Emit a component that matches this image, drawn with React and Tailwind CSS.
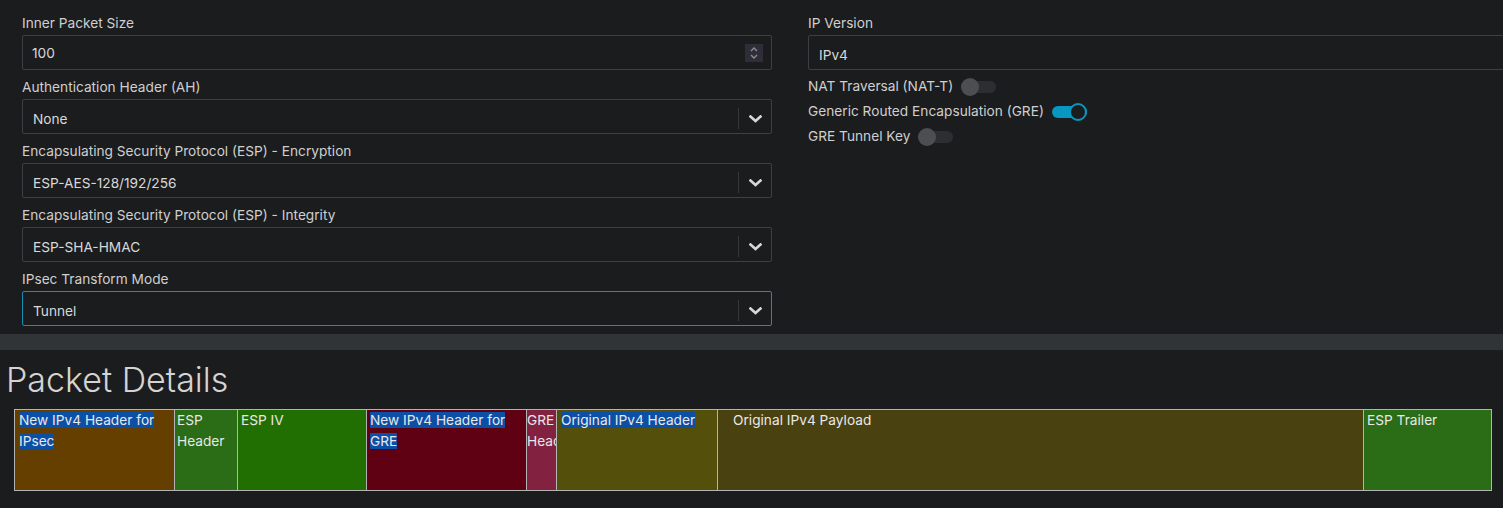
import React from 'react';

const Chevron = () => (
  <svg width="13" height="8" viewBox="0 0 13 8" fill="none">
    <polyline points="1.5,1.5 6.5,6 11.5,1.5" stroke="#d6d6d6" strokeWidth="2.6" strokeLinecap="square" />
  </svg>
);

const Label = ({ children }) => (
  <div className="h-[29px] pt-[7px] pb-[2px] text-[13.7px] leading-[20px] text-[#cfcfcf]">{children}</div>
);

const Select = ({ value, focused }) => (
  <div
    className={`flex h-[35px] items-stretch rounded-[2px] border ${
      focused ? 'border-[#1b8db3]' : 'border-[#3d4042]'
    } bg-[#1b1c1e]`}
  >
    <div className="flex flex-1 items-center pl-[10px] pt-[5px] text-[13.7px] text-[#d8d8d8]">{value}</div>
    <div className="mt-[8px] mb-[4px] w-px bg-[#35383a]" />
    <div className="flex w-[32px] items-center justify-center pt-[5px]">
      <Chevron />
    </div>
  </div>
);

const Toggle = ({ on }) => (
  <div className="relative ml-[8px] h-[18px] w-[35px]">
    <div
      className={`absolute left-0 right-0 top-[3px] h-[12px] rounded-full ${on ? 'bg-[#0897c0]' : 'bg-[#2c2f32]'}`}
    />
    {on ? (
      <div className="absolute right-0 top-0 h-[18px] w-[18px] rounded-full border-2 border-[#0897c0] bg-[#1b1c1e]" />
    ) : (
      <div className="absolute left-0 top-0 h-[18px] w-[18px] rounded-full bg-[#4b4f52]" />
    )}
  </div>
);

const Hl = ({ children }) => <span className="bg-[#0b4fa7]">{children}</span>;

const App = () => {
  const segments = [
    { w: 'w-[160px]', bg: 'bg-[#653f00]', pl: 'pl-[4px]', text: <Hl>New IPv4 Header for IPsec</Hl> },
    { w: 'w-[63px]', bg: 'bg-[#2a6d16]', pl: 'pl-[2px]', text: 'ESP Header' },
    { w: 'w-[129px]', bg: 'bg-[#216f02]', pl: 'pl-[3px]', text: 'ESP IV' },
    { w: 'w-[160px]', bg: 'bg-[#5f0013]', pl: 'pl-[3px]', text: <Hl>New IPv4 Header for GRE</Hl> },
    { w: 'w-[30px]', bg: 'bg-[#832140]', pl: 'pl-0', text: 'GRE Header' },
    { w: 'w-[161px]', bg: 'bg-[#554f0c]', pl: 'pl-[4px]', text: <Hl>Original IPv4 Header</Hl> },
    { w: 'w-[646px]', bg: 'bg-[#4a4111]', pl: 'pl-[15px]', text: 'Original IPv4 Payload' },
    { w: 'w-[127px]', bg: 'bg-[#2a6d16]', pl: 'pl-[3px]', text: 'ESP Trailer', last: true },
  ];

  return (
    <div className="min-h-screen overflow-hidden bg-[#1b1c1e] font-['Inter',sans-serif]">
      <div className="flex gap-[36px] pl-[22px] pt-[6px]">
        {/* left column */}
        <div className="w-[750px] shrink-0">
          <Label>Inner Packet Size</Label>
          <div className="flex h-[35px] items-center rounded-[2px] border border-[#3d4042] bg-[#1b1c1e] pr-[8px]">
            <div className="flex-1 pl-[9px] pt-[1px] text-[13.7px] text-[#d8d8d8]">100</div>
            <div className="flex h-[18px] w-[18px] flex-col items-center justify-center gap-[2px] bg-[#2e2d38]">
              <svg width="8" height="5" viewBox="0 0 8 5" fill="none">
                <polyline points="1,4 4,1 7,4" stroke="#8c8b96" strokeWidth="1.4" />
              </svg>
              <svg width="8" height="5" viewBox="0 0 8 5" fill="none">
                <polyline points="1,1 4,4 7,1" stroke="#8c8b96" strokeWidth="1.4" />
              </svg>
            </div>
          </div>
          <Label>Authentication Header (AH)</Label>
          <Select value="None" />
          <Label>Encapsulating Security Protocol (ESP) - Encryption</Label>
          <Select value="ESP-AES-128/192/256" />
          <Label>Encapsulating Security Protocol (ESP) - Integrity</Label>
          <Select value="ESP-SHA-HMAC" />
          <Label>IPsec Transform Mode</Label>
          <Select value="Tunnel" focused />
        </div>

        {/* right column */}
        <div className="w-[750px] shrink-0">
          <Label>IP Version</Label>
          <div className="flex h-[35px] items-center rounded-[2px] border border-[#3d4042] bg-[#1b1c1e] pl-[10px] pt-[5px] text-[13.7px] text-[#d8d8d8]">
            IPv4
          </div>
          <div className="mt-[4px] flex flex-col text-[13.7px] text-[#cfcfcf]">
            <div className="flex h-[25px] items-center">
              NAT Traversal (NAT-T)
              <Toggle />
            </div>
            <div className="flex h-[25px] items-center">
              Generic Routed Encapsulation (GRE)
              <Toggle on />
            </div>
            <div className="flex h-[25px] items-center">
              GRE Tunnel Key
              <Toggle />
            </div>
          </div>
        </div>
      </div>

      <div className="mt-[8px] h-[16px] bg-[#303437]" />

      <h2 className="mt-[8px] pl-[6px] text-[34px] font-light leading-[43px] text-[#d4d4d4]">Packet Details</h2>

      {/* packet bar */}
      <div className="ml-[14px] mt-[8px] flex h-[82px] w-[1478px] border border-[#b3b3b3]">
        {segments.map((s, i) => (
          <div
            key={i}
            className={`${s.w} ${s.bg} ${s.pl} ${s.last ? '' : 'border-r border-[#b3b3b3]'} shrink-0 overflow-hidden text-[13.7px] leading-[21px] text-[#e8e8e8]`}
          >
            {s.text}
          </div>
        ))}
      </div>
    </div>
  );
};

export default App;
